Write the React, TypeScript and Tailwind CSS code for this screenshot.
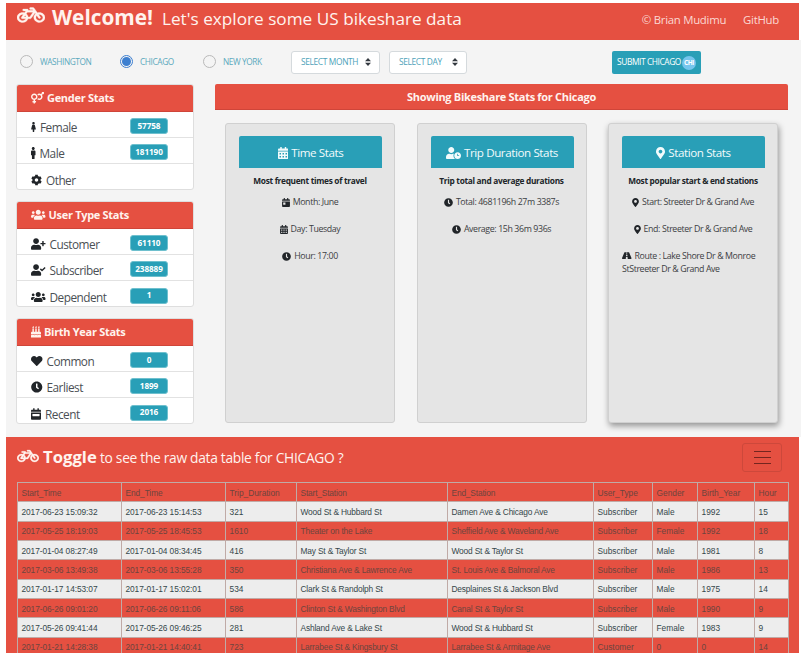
import type { ReactNode } from "react";
import type { IconType } from "react-icons";
import {
  FaBicycle, FaVenusMars, FaFemale, FaMale, FaCog, FaUsers, FaUserPlus, FaUserCheck,
  FaBirthdayCake, FaHeart, FaClock, FaCalendarWeek, FaCalendarDay, FaCalendarAlt,
  FaUserClock, FaMapMarkerAlt, FaRoad,
} from "react-icons/fa";

type Stat = { icon: IconType; iconWidth: string; label: string; value?: string };

function StatCard({ icon: Icon, iconWidth, title, rows }: { icon: IconType; iconWidth: string; title: string; rows: Stat[] }) {
  return (
    <section className="h-[106px] w-[178px] shrink-0 overflow-hidden rounded-[3px] border border-[#dedede] bg-white">
      <h2 className="-mx-px -mt-px flex h-[28px] items-center gap-[3px] border-b border-[#cf4539] bg-[#e55041] pl-[15px] pt-[2px] text-[11px] font-bold tracking-[-0.3px] text-[#fff3ee]">
        <Icon className={`mb-px h-[11.5px] ${iconWidth}`} />
        <span>{title}</span>
      </h2>
      {rows.map(({ icon: RowIcon, iconWidth: rowWidth, label, value }) => (
        <div key={label} className="flex h-[26px] items-center border-b border-[#e2e2e2] pl-[14px] last:border-0">
          <div className="flex w-[99px] items-center gap-[4px] pt-[5px] text-[11.8px] leading-[16px] tracking-[-0.5px] text-[#4b5054]">
            <RowIcon className={`h-[12px] text-[#212529] ${rowWidth}`} />
            <span>{label}</span>
          </div>
          {value && (
            <span className="mt-[3px] flex h-[16px] w-[38px] items-center justify-center rounded-[3px] border border-[#6fc0ce] bg-[#299fb7] text-[8.2px] font-bold tracking-[-0.1px] text-white">
              {value}
            </span>
          )}
        </div>
      ))}
    </section>
  );
}

function DetailCard({ icon: Icon, iconWidth, title, subtitle, raised, children }: {
  icon: IconType; iconWidth: string; title: string; subtitle: string; raised?: boolean; children: ReactNode;
}) {
  return (
    <section className={`h-[300px] w-[170px] rounded-[3px] border border-[#d0d0d0] bg-[#e5e5e5] px-[13px] pt-[12px] ${raised ? "shadow-[1px_3px_6px_rgba(0,0,0,0.4)]" : ""}`}>
      <h3 className="flex h-[32px] w-[143px] items-center justify-center gap-[3px] rounded-t-[2px] bg-[#299fb7] pt-[2px] text-[11.6px] tracking-[-0.4px] text-[#f2fbfc]">
        <Icon className={`mb-px h-[12px] ${iconWidth}`} />
        <span>{title}</span>
      </h3>
      <p className="mt-[6px] flex h-[14px] justify-center whitespace-nowrap text-[8.3px] font-bold leading-[14px] tracking-[-0.3px] text-[#212529]">{subtitle}</p>
      <div className="mt-[8px] flex flex-col gap-[14px] text-[8.8px] leading-[13px] tracking-[-0.38px] text-[#3c4043]">{children}</div>
    </section>
  );
}

function Line({ icon: Icon, iconWidth, children }: { icon: IconType; iconWidth: string; children: ReactNode }) {
  return (
    <p className="flex items-center justify-center gap-[3px] whitespace-nowrap">
      <Icon className={`mb-px h-[9px] text-[#212529] ${iconWidth}`} />
      <span>{children}</span>
    </p>
  );
}

function City({ name, checked }: { name: string; checked?: boolean }) {
  return (
    <label className="flex items-center gap-[7px] text-[8.3px] tracking-[-0.4px] text-[#5ba9bd]">
      <span className={`-mt-px flex size-[13px] items-center justify-center rounded-full border ${checked ? "border-[#3d7fd0]" : "border-[#b9b9b9]"}`}>
        {checked && <span className="size-[9px] rounded-full bg-[#3d7fd0]" />}
      </span>
      <span>{name}</span>
    </label>
  );
}

function Select({ label, width }: { label: string; width: string }) {
  return (
    <div className={`flex h-[23px] items-center justify-between rounded-[3px] border border-[#d5dadd] bg-white pl-[9px] pr-[8px] text-[8.4px] tracking-[-0.36px] text-[#4ea2b9] ${width}`}>
      <span className="whitespace-nowrap">{label}</span>
      <svg viewBox="0 0 6 8" className="h-[8px] w-[6px] fill-[#343a40]"><path d="M3 0L6 3.3H0zM0 4.7H6L3 8z" /></svg>
    </div>
  );
}

const columns = ["Start_Time", "End_Time", "Trip_Duration", "Start_Station", "End_Station", "User_Type", "Gender", "Birth_Year", "Hour"];
const trips = [
  ["2017-06-23 15:09:32", "2017-06-23 15:14:53", "321", "Wood St & Hubbard St", "Damen Ave & Chicago Ave", "Subscriber", "Male", "1992", "15"],
  ["2017-05-25 18:19:03", "2017-05-25 18:45:53", "1610", "Theater on the Lake", "Sheffield Ave & Waveland Ave", "Subscriber", "Female", "1992", "18"],
  ["2017-01-04 08:27:49", "2017-01-04 08:34:45", "416", "May St & Taylor St", "Wood St & Taylor St", "Subscriber", "Male", "1981", "8"],
  ["2017-03-06 13:49:38", "2017-03-06 13:55:28", "350", "Christiana Ave & Lawrence Ave", "St. Louis Ave & Balmoral Ave", "Subscriber", "Male", "1986", "13"],
  ["2017-01-17 14:53:07", "2017-01-17 15:02:01", "534", "Clark St & Randolph St", "Desplaines St & Jackson Blvd", "Subscriber", "Male", "1975", "14"],
  ["2017-06-26 09:01:20", "2017-06-26 09:11:06", "586", "Clinton St & Washington Blvd", "Canal St & Taylor St", "Subscriber", "Male", "1990", "9"],
  ["2017-05-26 09:41:44", "2017-05-26 09:46:25", "281", "Ashland Ave & Lake St", "Wood St & Hubbard St", "Subscriber", "Female", "1983", "9"],
  ["2017-01-21 14:28:38", "2017-01-21 14:40:41", "723", "Larrabee St & Kingsbury St", "Larrabee St & Armitage Ave", "Customer", "0", "0", "14"],
];

export default function App() {
  return (
    <div className="h-[661px] w-[807px] overflow-hidden bg-white pl-[6px] pt-[3px] font-['Open_Sans','Noto_Sans',sans-serif]">
      <header className="flex h-[37px] w-[793px] items-center bg-[#e55041] pl-[11px] text-[#fff3ee]">
        <FaBicycle className="mb-[13px] h-[20px] w-[28px] stroke-[8]" preserveAspectRatio="none" />
        <h1 className="mb-[7px] ml-[7px] flex items-baseline whitespace-nowrap">
          <span className="w-[110px] text-[20.8px] font-bold">Welcome!</span>
          <span className="text-[17.2px]">Let's explore some US bikeshare data</span>
        </h1>
        <nav className="-mt-[3px] ml-auto mr-[20px] flex gap-[17px] text-[11.4px] tracking-[-0.28px] text-[#fbd9d3]">
          <span>© Brian Mudimu</span>
          <span>GitHub</span>
        </nav>
      </header>

      <main className="h-[397px] w-[795px] bg-[#f4f4f4] px-[10px]">
        <form className="flex h-[44px] items-center pl-[4px]">
          <div className="w-[100px]"><City name="WASHINGTON" /></div>
          <div className="w-[83px]"><City name="CHICAGO" checked /></div>
          <div className="w-[88px]"><City name="NEW YORK" /></div>
          <Select label="SELECT MONTH" width="w-[89px]" />
          <div className="w-[9px]" />
          <Select label="SELECT DAY" width="w-[78px]" />
          <button type="button" className="ml-[145px] flex h-[23px] w-[89px] items-center rounded-[2px] bg-[#299fb7] pl-[4px] text-[8.4px] tracking-[-0.42px] text-white">
            <span className="w-[66px] whitespace-nowrap">SUBMIT CHICAGO</span>
            <span className="mt-px flex size-[14px] shrink-0 items-center justify-center rounded-full bg-[#75c5ed] text-[6.5px] font-bold">CHi</span>
          </button>
        </form>

        <div className="flex gap-[21px]">
          <aside className="flex flex-col gap-[11px]">
            <StatCard icon={FaVenusMars} iconWidth="w-[13px]" title="Gender Stats" rows={[
              { icon: FaFemale, iconWidth: "w-[5px]", label: "Female", value: "57758" },
              { icon: FaMale, iconWidth: "w-[4.5px]", label: "Male", value: "181190" },
              { icon: FaCog, iconWidth: "w-[11px]", label: "Other" },
            ]} />
            <StatCard icon={FaUsers} iconWidth="w-[14.5px]" title="User Type Stats" rows={[
              { icon: FaUserPlus, iconWidth: "w-[14.5px]", label: "Customer", value: "61110" },
              { icon: FaUserCheck, iconWidth: "w-[14.5px]", label: "Subscriber", value: "238889" },
              { icon: FaUsers, iconWidth: "w-[14.5px]", label: "Dependent", value: "1" },
            ]} />
            <StatCard icon={FaBirthdayCake} iconWidth="w-[10px]" title="Birth Year Stats" rows={[
              { icon: FaHeart, iconWidth: "w-[11.5px]", label: "Common", value: "0" },
              { icon: FaClock, iconWidth: "w-[11.5px]", label: "Earliest", value: "1899" },
              { icon: FaCalendarWeek, iconWidth: "w-[10px]", label: "Recent", value: "2016" },
            ]} />
          </aside>
          <div className="w-[573px]">
            <h2 className="flex h-[26px] items-center justify-center rounded-t-[2px] border-b border-[#cf4539] bg-[#e55041] pt-[2px] text-[11px] font-bold tracking-[-0.3px] text-[#fff3ee]">Showing Bikeshare Stats for Chicago</h2>
            <div className="ml-[10px] mt-[13px] flex gap-[21.5px]">
              <DetailCard icon={FaCalendarAlt} iconWidth="w-[10.5px]" title="Time Stats" subtitle="Most frequent times of travel">
                <Line icon={FaCalendarDay} iconWidth="w-[8px]">Month: June</Line>
                <Line icon={FaCalendarAlt} iconWidth="w-[8px]">Day: Tuesday</Line>
                <Line icon={FaClock} iconWidth="w-[9px]">Hour: 17:00</Line>
              </DetailCard>
              <DetailCard icon={FaUserClock} iconWidth="w-[15px]" title="Trip Duration Stats" subtitle="Trip total and average durations">
                <Line icon={FaClock} iconWidth="w-[9px]">Total: 4681196h 27m 3387s</Line>
                <Line icon={FaClock} iconWidth="w-[9px]">Average: 15h 36m 936s</Line>
              </DetailCard>
              <DetailCard icon={FaMapMarkerAlt} iconWidth="w-[9px]" title="Station Stats" subtitle="Most popular start & end stations" raised>
                <Line icon={FaMapMarkerAlt} iconWidth="w-[7px]">Start: Streeter Dr & Grand Ave</Line>
                <Line icon={FaMapMarkerAlt} iconWidth="w-[7px]">End: Streeter Dr & Grand Ave</Line>
                <p className="whitespace-nowrap"><FaRoad className="mb-[2px] mr-[3px] inline h-[9px] w-[9.5px] text-[#212529]" preserveAspectRatio="none" />Route : Lake Shore Dr & Monroe<br />StStreeter Dr & Grand Ave</p>
              </DetailCard>
            </div>
          </div>
        </div>
      </main>

      <section className="h-[216px] w-[793px] overflow-hidden bg-[#e55041] pl-[11px]">
        <div className="flex h-[45px] items-center text-[#fff3ee]">
          <FaBicycle className="mb-[8px] h-[16px] w-[22px] stroke-[8]" preserveAspectRatio="none" />
          <h2 className="mb-[5px] ml-[4px] flex items-baseline whitespace-nowrap">
            <span className="w-[57px] text-[16.7px] font-bold">Toggle</span>
            <span className="text-[13.8px] tracking-[-0.31px]">to see the raw data table for CHICAGO ?</span>
          </h2>
          <button type="button" aria-label="Toggle table" className="mb-[4px] ml-auto mr-[17px] flex h-[29px] w-[40px] flex-col items-center justify-center gap-[5px] rounded-[3px] border border-[#cd483b]">
            <span className="h-px w-[17px] bg-[#74251f]" />
            <span className="h-px w-[17px] bg-[#74251f]" />
            <span className="h-px w-[17px] bg-[#74251f]" />
          </button>
        </div>
        <table className="w-[771px] table-fixed border-collapse font-['Liberation_Sans',sans-serif] text-[8.35px] text-[#35474b]">
          <colgroup>
            <col className="w-[104px]" /><col className="w-[104px]" /><col className="w-[71px]" />
            <col className="w-[151px]" /><col className="w-[146px]" /><col className="w-[59px]" />
            <col className="w-[45px]" /><col className="w-[57px]" /><col className="w-[34px]" />
          </colgroup>
          <tbody>
            {[columns, ...trips].map((row, i) => (
              <tr key={i} className="h-[19.33px] odd:text-[#6d443e] even:bg-[#ededed]">
                {row.map((cell, j) => (
                  <td key={j} className={`whitespace-nowrap border border-[#c0aaa6] p-0 pl-[3.5px] pt-px leading-[12px] ${j < 2 ? "tracking-[-0.08px]" : ""} ${j === 3 || j === 4 ? "tracking-[-0.16px]" : ""}`}>{cell}</td>
                ))}
              </tr>
            ))}
          </tbody>
        </table>
      </section>
    </div>
  );
}
